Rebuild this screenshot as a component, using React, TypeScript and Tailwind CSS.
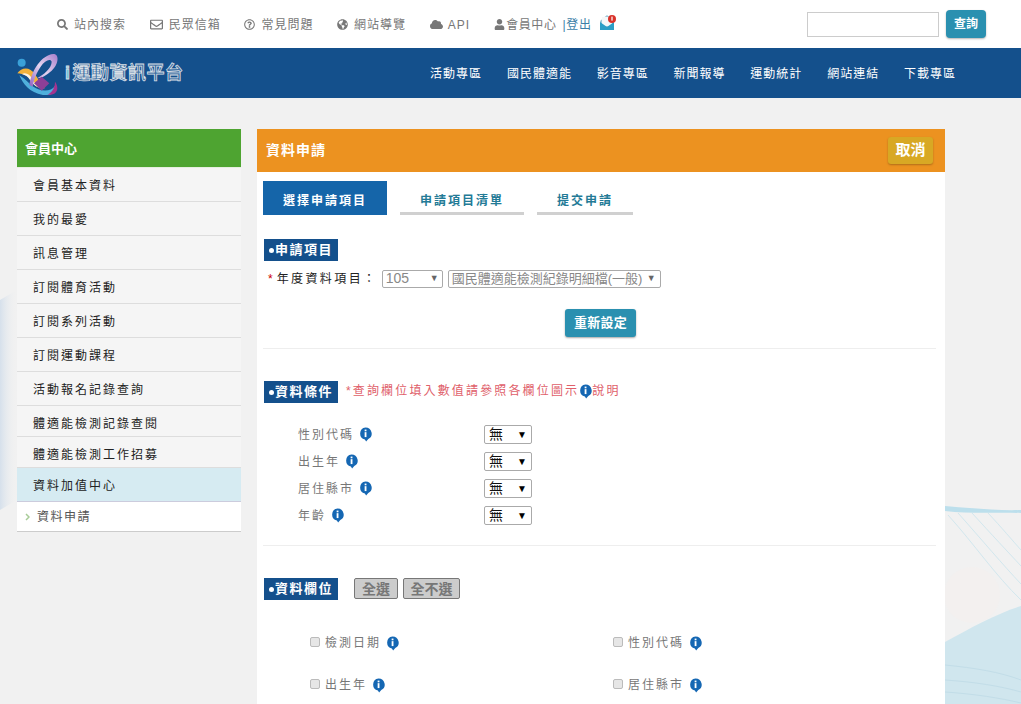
import React from 'react';
import { FaSearch, FaRegEnvelope, FaRegQuestionCircle, FaGlobeAmericas, FaCloud, FaUser } from 'react-icons/fa';

const topLinks = [
  { label: '站內搜索', icon: <FaSearch size={11} /> },
  { label: '民眾信箱', icon: <FaRegEnvelope size={13} /> },
  { label: '常見問題', icon: <FaRegQuestionCircle size={11} /> },
  { label: '網站導覽', icon: <FaGlobeAmericas size={11} /> },
];

const navLinks = ['活動專區', '國民體適能', '影音專區', '新聞報導', '運動統計', '網站連結', '下載專區'];

const sideLinks = [
  { label: '會員基本資料', h: 'h-[34px] pt-[3px]' },
  { label: '我的最愛', h: 'h-[34px] pt-[3px]' },
  { label: '訊息管理', h: 'h-[34px] pt-[3px]' },
  { label: '訂閱體育活動', h: 'h-[34px] pt-[3px]' },
  { label: '訂閱系列活動', h: 'h-[34px] pt-[3px]' },
  { label: '訂閱運動課程', h: 'h-[34px] pt-[3px]' },
  { label: '活動報名記錄查詢', h: 'h-[34px] pt-[3px]' },
  { label: '體適能檢測記錄查閱', h: 'h-[31px] pt-[5px]' },
  { label: '體適能檢測工作招募', h: 'h-[31px] pt-[5px]' },
];

const conditions = ['性別代碼', '出生年', '居住縣市', '年齡'];

// speech bubble "i" used next to every field
const InfoIcon = () => (
  <svg width="13" height="15" viewBox="0 0 12 14" className="shrink-0">
    <path d="M6 0.5a5.7 5.7 0 0 1 2.6 10.8L6.6 13.6 5.4 11.7A5.7 5.7 0 0 1 6 0.5z" fill="#1567b3" />
    <rect x="5.2" y="2.4" width="1.7" height="1.6" fill="#fff" />
    <rect x="5.2" y="4.8" width="1.7" height="4.6" fill="#fff" />
  </svg>
);

const Logo = () => (
  <svg width="44" height="44" viewBox="18 3 132 132" className="shrink-0">
    <defs>
      <linearGradient id="loopFill" x1="0" y1="1" x2="1" y2="0">
        <stop offset="0" stopColor="#8f5fc0" />
        <stop offset="0.5" stopColor="#e4d4f0" />
        <stop offset="1" stopColor="#a77cc9" />
      </linearGradient>
    </defs>
    <circle cx="35" cy="38" r="12" fill="#3aa0d8" />
    <path d="M22 70C35 50 60 50 75 72 85 88 90 100 105 115 85 118 70 105 62 90 55 78 40 72 22 70z" fill="#f2b13a" />
    <path d="M36 72C48 66 60 74 66 86 72 98 82 108 98 114 80 114 68 102 60 90 54 80 46 75 36 72z" fill="#fdf3e2" />
    <path d="M28 76C40 104 60 130 105 136 125 138 138 125 135 108 125 122 105 125 85 118 62 110 50 88 28 76z" fill="#4fb0dc" />
    <path d="M58 105C65 60 95 15 130 12 150 12 145 45 125 62 110 75 95 85 80 85 100 75 125 55 125 35 122 25 105 30 92 50 80 68 72 85 68 110z" fill="url(#loopFill)" />
    <path d="M72 100L95 80 118 100 95 122z" fill="#8d3f97" />
    <path d="M135 95C150 115 140 138 112 134 125 128 135 115 135 95z" fill="#a3348f" />
  </svg>
);

const SectionLabel = ({ text }: { text: string }) => (
  <div className="flex h-[22px] w-[74px] shrink-0 items-center bg-[#14508c] pl-[5px] text-[13px] font-bold tracking-[1.5px] text-white">
    <span className="mr-[1px] h-[5px] w-[5px] rounded-full bg-white" />
    {text}
  </div>
);

const FakeSelect = ({ value, className, arrow }: { value: string; className: string; arrow: string }) => (
  <div className={`flex items-center justify-between rounded-[2px] border border-[#aaa] bg-white ${className}`}>
    <span>{value}</span>
    <span className={arrow}>▼</span>
  </div>
);

const App: React.FC = () => {
  return (
    <div className="relative h-[704px] w-[1021px] overflow-hidden bg-[#f1f1f1] font-['Liberation_Sans','Noto_Sans_CJK_TC',sans-serif] text-[12px] text-[#777]">
      {/* wave background */}
      <svg className="absolute left-0 top-0" width="1021" height="704" viewBox="0 0 1021 704">
        <defs>
          <linearGradient id="leftFade" x1="0" y1="0" x2="1" y2="0">
            <stop offset="0" stopColor="#cfdcea" stopOpacity="0.8" />
            <stop offset="1" stopColor="#f1f1f1" stopOpacity="0" />
          </linearGradient>
        </defs>
        <path d="M0 300L17 290V500L0 510z" fill="url(#leftFade)" />
        <circle cx="972" cy="595" r="28" fill="#f3f0ef" />
        <path d="M945 511C970 514 1000 512 1021 513V510C1000 511 970 508 945 506z" fill="#bcdfec" />
        <path d="M945 642C970 628 1000 612 1021 606V704H945z" fill="#d0e6ee" />
        <path d="M948 515C975 545 995 575 1021 600M958 513C982 540 1003 565 1021 584M972 513C992 535 1008 552 1021 566M988 513C1002 528 1012 540 1021 550" fill="none" stroke="#d2e7ee" strokeWidth="1" />
        <path d="M945 665C975 668 1000 672 1021 680M945 680C975 682 1000 686 1021 692M945 692C975 694 1000 698 1021 703" fill="none" stroke="#c2dde8" strokeWidth="1" />
      </svg>

      <div className="relative">
        {/* top bar */}
        <header className="flex h-[48px] items-center bg-white pl-[57px] pr-[35px]">
          <div className="flex flex-1 items-center pt-[1px] tracking-[1px]">
            {topLinks.map((link) => (
              <div key={link.label} className="mr-[23.7px] flex items-center gap-[6px]">
                {link.icon}
                <span>{link.label}</span>
              </div>
            ))}
            <div className="mr-[24px] flex items-center gap-[5px]">
              <FaCloud size={13} />
              <span>API</span>
            </div>
            <div className="flex items-center gap-[1px]">
              <FaUser size={11} />
              <span className="tracking-[0.6px]">會員中心</span>
              <span className="ml-[5px] tracking-[0.6px] text-[#3d7fa8]">|登出</span>
            </div>
            <svg width="18" height="18" viewBox="0 0 18 18" className="mb-[5px] ml-[8px]">
              <path d="M1 8l7-6 7 6v9H1z" fill="#9fc8d8" />
              <path d="M3 4h10v9H3z" fill="#f4f7f8" />
              <path d="M1 9l7 5 7-5v8H1z" fill="#2b9ec6" />
              <circle cx="13" cy="6" r="4" fill="#d9322a" />
              <rect x="12.4" y="3.6" width="1.2" height="4" fill="#fff" />
            </svg>
          </div>
          <div className="h-[25px] w-[132px] border border-[#ccc] bg-white" />
          <button className="ml-[7px] h-[28px] w-[40px] rounded-[4px] bg-[#2a90b0] text-[12px] font-bold text-white shadow-[0_1px_2px_rgba(0,0,0,0.3)]">
            查詢
          </button>
        </header>

        {/* blue nav */}
        <nav className="flex h-[50px] items-center bg-[#14508c] pl-[16px] pr-[65px]">
          <Logo />
          <div className="ml-[5px] flex-1 pt-[1px] text-[18px] font-bold tracking-[0.5px] text-[#3f6f9f] [-webkit-text-stroke:0.8px_#d8dfe6]">
            <span className="mr-[2px] text-[#6ec5d8]">i</span>運動資訊平台
          </div>
          <div className="flex gap-[24.8px] pt-[1px] tracking-[1px] text-white">
            {navLinks.map((link) => (
              <span key={link}>{link}</span>
            ))}
          </div>
        </nav>

        {/* content */}
        <div className="flex items-start gap-[16px] pl-[17px] pt-[31px]">
          <aside className="w-[224px] shrink-0 text-[#222]">
            <div className="flex h-[39px] items-center border-b border-[#e6efe0] bg-[#4ea431] pl-[8px] pt-[2px] text-[13px] font-bold text-white">會員中心</div>
            {sideLinks.map((item) => (
              <div
                key={item.label}
                className={`flex items-center border-b border-[#ddd] bg-[#f5f5f5] pl-[16px] tracking-[2px] ${item.h}`}
              >
                {item.label}
              </div>
            ))}
            <div className="flex h-[34px] items-center border-b border-[#ccd] bg-[#d6ebf2] pl-[16px] pt-[2px] tracking-[2px]">資料加值中心</div>
            <div className="flex h-[30px] items-center border-b border-[#ccc] bg-white pl-[8px] tracking-[1.5px] text-[#555]">
              <svg width="5" height="8" viewBox="0 0 5 8" className="mr-[7px]">
                <path d="M1 1l3 3-3 3" fill="none" stroke="#a8cc98" strokeWidth="1.5" />
              </svg>
              資料申請
            </div>
          </aside>

          <main className="w-[688px] shrink-0 bg-white">
            <div className="flex h-[43px] items-center justify-between bg-[#ec9220] pl-[9px] pr-[12px]">
              <span className="text-[14px] font-bold tracking-[1px] text-white">資料申請</span>
              <button className="h-[27px] w-[45px] rounded-[3px] bg-[#d8a824] text-[15px] font-bold text-white shadow-[0_1px_2px_rgba(0,0,0,0.25)]">
                取消
              </button>
            </div>

            <div className="px-[6px] pt-[9px]">
              <div className="flex gap-[13px] text-[12px] font-bold tracking-[2px]">
                <div className="flex h-[34px] w-[124px] items-center justify-center bg-[#1565a9] pt-[6px] text-white">選擇申請項目</div>
                <div className="flex h-[34px] w-[124px] items-center justify-center border-b-[3px] border-[#d0d0d0] pt-[8px] text-[#237a96]">申請項目清單</div>
                <div className="flex h-[34px] w-[96px] items-center justify-center border-b-[3px] border-[#d0d0d0] pt-[8px] text-[#237a96]">提交申請</div>
              </div>

              <div className="ml-[1px] mt-[24px]">
                <SectionLabel text="申請項目" />
              </div>
              <div className="ml-[5px] mt-[8px] flex items-center">
                <span className="mr-[4px] text-[#c00]">*</span>
                <span className="w-[105px] pt-[1px] tracking-[2.4px] text-[#222]">年度資料項目：</span>
                <FakeSelect value="105" arrow="text-[9px] text-[#666]" className="h-[18px] w-[61px] px-[3px] text-[14px] text-[#888]" />
                <FakeSelect value="國民體適能檢測紀錄明細檔(一般)" arrow="text-[9px] text-[#666]" className="ml-[5px] h-[18px] w-[213px] pl-[3px] pr-[4px] text-[13px] text-[#888]" />
              </div>
              <div className="ml-[302px] mt-[21px]">
                <button className="h-[28px] w-[71px] rounded-[3px] bg-[#2a90b0] text-[13px] font-bold tracking-[0.3px] text-white shadow-[0_1px_2px_rgba(0,0,0,0.35)]">
                  重新設定
                </button>
              </div>
              <hr className="mr-[3px] mt-[11px] border-[#eee]" />

              <div className="ml-[1px] mt-[32px] flex items-start gap-[8px]">
                <SectionLabel text="資料條件" />
                <span className="flex items-center pt-[1px] tracking-[2.15px] text-[#e0606a]">
                  *查詢欄位填入數值請參照各欄位圖示
                  <InfoIcon />
                  說明
                </span>
              </div>
              <div className="ml-[35px] mt-[21px] flex flex-col gap-[7px]">
                {conditions.map((name) => (
                  <div key={name} className="flex h-[20px] items-center">
                    <div className="flex w-[186px] items-center gap-[5px] pt-[1px] tracking-[2px]">
                      {name}
                      <InfoIcon />
                    </div>
                    <FakeSelect value="無" arrow="text-[10px] text-black" className="h-[19px] w-[48px] px-[4px] text-[14px] text-[#111]" />
                  </div>
                ))}
              </div>
              <hr className="mr-[3px] mt-[20px] border-[#eee]" />

              <div className="ml-[1px] mt-[32px] flex items-start gap-[16px]">
                <SectionLabel text="資料欄位" />
                <div className="flex gap-[5px] text-[14px] font-bold">
                  <button className="h-[21px] w-[44px] rounded-[2px] border border-[#777] bg-[#ccc]">全選</button>
                  <button className="h-[21px] w-[57px] rounded-[2px] border border-[#777] bg-[#ccc]">全不選</button>
                </div>
              </div>

              <div className="ml-[47px] mt-[35px] grid grid-cols-[303px_1fr] gap-y-[26px] tracking-[2px]">
                {['檢測日期', '性別代碼', '出生年', '居住縣市'].map((name) => (
                  <label key={name} className="flex h-[16px] items-center gap-[5px]">
                    <span className="mb-[2px] h-[10px] w-[10px] rounded-[2px] border border-[#bbb] bg-[#e6e6e6]" />
                    {name}
                    <InfoIcon />
                  </label>
                ))}
              </div>
              <div className="h-[60px]" />
            </div>
          </main>
        </div>
      </div>
    </div>
  );
};

export default App;
